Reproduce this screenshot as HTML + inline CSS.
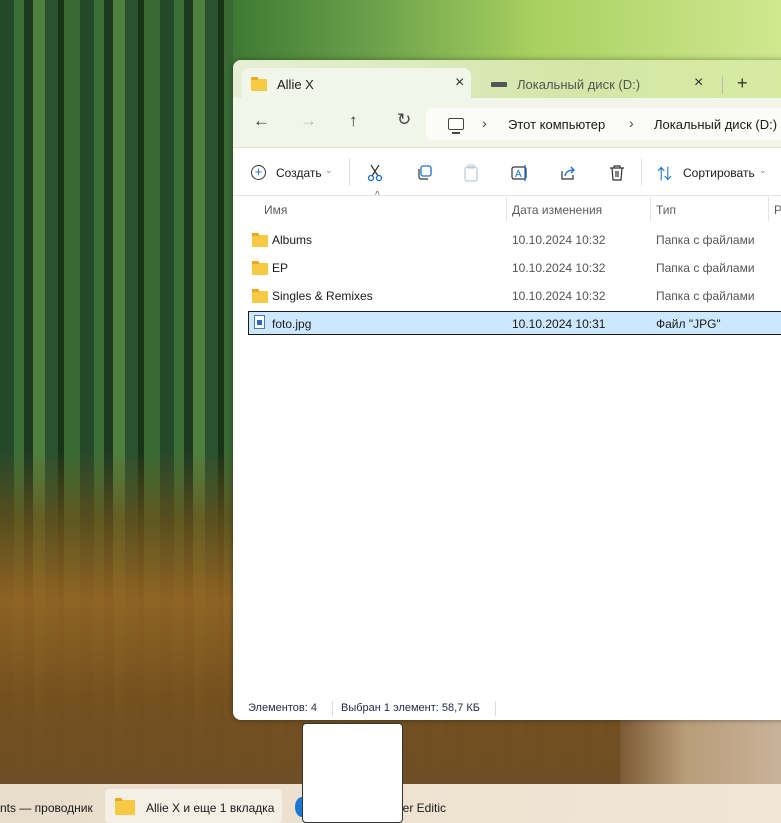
<!DOCTYPE html>
<html><head><meta charset="utf-8"><style>
*{margin:0;padding:0;box-sizing:border-box}
body{width:781px;height:823px;overflow:hidden;position:relative;font-family:"Liberation Sans","Noto Sans CJK SC",sans-serif;font-size:12px;color:#1a1a1a}
.bg{position:absolute;inset:0;background:
linear-gradient(180deg,rgba(0,0,0,0) 0,rgba(0,0,0,0) 450px,rgba(110,80,25,.7) 520px,rgba(150,100,35,.92) 600px,rgba(120,80,30,.95) 700px,#6e4e26 784px),
repeating-linear-gradient(90deg,#24492a 0 14px,#3c6e38 14px 24px,#1c3a20 24px 33px,#4f8040 33px 45px,#2a5230 45px 58px,#183418 58px 64px,#3a6a34 64px 80px),
#2d5a28}
.bg2{position:absolute;left:233px;top:0;width:548px;height:70px;background:linear-gradient(90deg,#3f7a34,#6aa04a 25%,#a8d060 55%,#d0e890)}
.road{position:absolute;left:620px;top:720px;width:161px;height:64px;background:linear-gradient(90deg,#7a5a34,#b89c78 40%,#c9b39a)}
.win{position:absolute;left:233px;top:60px;width:560px;height:660px;background:#fff;border-radius:8px 0 0 8px;overflow:hidden;box-shadow:0 0 6px rgba(0,0,0,.4)}
.tabs{height:38px;background:linear-gradient(90deg,#e6efd6,#d4e6a8 60%,#d6eba0)}
.tab{position:absolute;top:8px;left:9px;width:229px;height:32px;background:#f2f6ea;border-radius:8px 8px 0 0}
.nav{position:absolute;top:38px;left:0;right:0;height:50px;background:#f2f6ea;border-bottom:1px solid #dfe6d2}
.addr{position:absolute;left:193px;top:10px;right:0;height:32px;background:#fbfcf8;border-radius:6px 0 0 6px}
.cmd{position:absolute;top:88px;left:0;right:0;height:48px;background:#fff;border-bottom:1px solid #e8e8e8}
.t{position:absolute;white-space:nowrap}
.hdr{color:#5b5b5b;font-size:12px}
.fold{position:absolute;width:16px;height:12px;background:#f8c944;border-radius:1px}
.fold:before{content:"";position:absolute;left:0;top:-2px;width:7px;height:3px;background:#e9a820;border-radius:1px 1px 0 0}
.tb{position:absolute;left:0;top:784px;width:781px;height:39px;background:linear-gradient(90deg,#e8dccb,#efe3d2 60%,#f0e6d6)}
svg{position:absolute}
</style></head><body>
<div class="bg"></div><div class="bg2"></div><div class="road"></div>
<div class="win">
 <div class="tabs"></div>
 <div class="tab"></div>
 <div class="fold" style="left:18px;top:19px"></div>
 <div class="t" style="left:44px;top:17px;font-size:13px">Allie X</div>
 <div class="t" style="left:222px;top:14px;font-size:16px;color:#333">×</div>
 <div style="position:absolute;left:258px;top:22px;width:16px;height:5px;background:#555;border-radius:1px"></div>
 <div class="t" style="left:284px;top:17px;font-size:13px;color:#555">Локальный диск (D:)</div>
 <div class="t" style="left:461px;top:14px;font-size:16px;color:#333">×</div>
 <div style="position:absolute;left:489px;top:16px;width:1px;height:18px;background:#bbb"></div>
 <div class="t" style="left:504px;top:13px;font-size:18px;color:#333">+</div>
 <div class="nav">
  <div class="addr"></div>
  <div class="t" style="left:20px;top:13px;font-size:17px;color:#333">←</div>
  <div class="t" style="left:67px;top:13px;font-size:17px;color:#bbb">→</div>
  <div class="t" style="left:116px;top:13px;font-size:17px;color:#333">↑</div>
  <div class="t" style="left:164px;top:12px;font-size:17px;color:#444">↻</div>
  <div style="position:absolute;left:215px;top:20px;width:16px;height:12px;border:1.3px solid #444;border-radius:2px"></div>
  <div style="position:absolute;left:219px;top:34px;width:8px;height:1.5px;background:#444"></div>
  <div class="t" style="left:249px;top:17px;font-size:14px;color:#444">›</div>
  <div class="t" style="left:275px;top:19px;font-size:13px">Этот компьютер</div>
  <div class="t" style="left:396px;top:17px;font-size:14px;color:#444">›</div>
  <div class="t" style="left:421px;top:19px;font-size:13px">Локальный диск (D:)</div>
 </div>
 <div class="cmd">
  <div style="position:absolute;left:18px;top:17px;width:15px;height:15px;border:1.3px solid #333;border-radius:50%;font-size:13px;line-height:11px;text-align:center;color:#1a6fd1">+</div>
  <div class="t" style="left:43px;top:18px">Создать</div>
  <div class="t" style="left:92px;top:17px;font-size:9px;color:#888">⌄</div>
  <div style="position:absolute;left:116px;top:10px;width:1px;height:28px;background:#e0e0e0"></div>
  <svg style="left:134px;top:16px" width="16" height="18" viewBox="0 0 16 18"><path d="M4 1 L11 12 M12 1 L5 12" stroke="#333" stroke-width="1.2" fill="none"/><circle cx="4" cy="14" r="2.5" stroke="#1a6fd1" fill="none" stroke-width="1.3"/><circle cx="12" cy="14" r="2.5" stroke="#1a6fd1" fill="none" stroke-width="1.3"/></svg>
  <svg style="left:183px;top:16px" width="18" height="18"><rect x="5" y="2" width="10" height="10" rx="2" stroke="#1a6fd1" fill="none" stroke-width="1.3"/><path d="M3 5 v8 a2 2 0 0 0 2 2 h7" stroke="#333" fill="none" stroke-width="1.2"/></svg>
  <svg style="left:229px;top:16px" width="18" height="18"><rect x="3" y="3" width="12" height="14" rx="2" stroke="#bcd" fill="none" stroke-width="1.2"/><rect x="6" y="1" width="6" height="3" stroke="#bcd" fill="none"/></svg>
  <svg style="left:277px;top:16px" width="20" height="18"><rect x="2" y="3" width="14" height="12" rx="2" stroke="#333" fill="none" stroke-width="1.2"/><text x="5" y="13" font-size="10" fill="#1a6fd1" font-family="Liberation Sans">A</text><path d="M15 1 v16" stroke="#1a6fd1" stroke-width="1.3"/></svg>
  <svg style="left:326px;top:16px" width="18" height="18"><path d="M3 7 v8 h11 v-4" stroke="#333" fill="none" stroke-width="1.2"/><path d="M6 12 q1 -6 9 -6 M12 3 l3 3 -3 3" stroke="#1a6fd1" fill="none" stroke-width="1.3"/></svg>
  <svg style="left:375px;top:16px" width="18" height="18"><path d="M2 4 h14 M6 4 v-2 h6 v2 M4 4 l1 12 h8 l1 -12 M8 7 v6 M10 7 v6" stroke="#333" fill="none" stroke-width="1.2"/></svg>
  <div style="position:absolute;left:408px;top:10px;width:1px;height:28px;background:#e0e0e0"></div>
  <div class="t" style="left:424px;top:15px;font-size:15px;color:#1a6fd1">⇅</div>
  <div class="t" style="left:450px;top:18px">Сортировать</div>
  <div class="t" style="left:526px;top:17px;font-size:9px;color:#888">⌄</div>
 </div>
 <div class="t" style="left:142px;top:130px;font-size:10px;color:#666">^</div>
 <div class="t hdr" style="left:31px;top:143px">Имя</div>
 <div style="position:absolute;left:273px;top:137px;width:1px;height:24px;background:#e5e5e5"></div>
 <div class="t hdr" style="left:279px;top:143px">Дата изменения</div>
 <div style="position:absolute;left:417px;top:137px;width:1px;height:24px;background:#e5e5e5"></div>
 <div class="t hdr" style="left:423px;top:143px">Тип</div>
 <div style="position:absolute;left:535px;top:137px;width:1px;height:24px;background:#e5e5e5"></div>
 <div class="t hdr" style="left:541px;top:143px">Р</div>

 <div class="fold" style="left:19px;top:175px"></div>
 <div class="t" style="left:39px;top:173px">Albums</div>
 <div class="t" style="left:279px;top:173px;color:#555">10.10.2024 10:32</div>
 <div class="t" style="left:423px;top:173px;color:#555">Папка с файлами</div>
 <div class="fold" style="left:19px;top:203px"></div>
 <div class="t" style="left:39px;top:201px">EP</div>
 <div class="t" style="left:279px;top:201px;color:#555">10.10.2024 10:32</div>
 <div class="t" style="left:423px;top:201px;color:#555">Папка с файлами</div>
 <div class="fold" style="left:19px;top:231px"></div>
 <div class="t" style="left:39px;top:229px">Singles &amp; Remixes</div>
 <div class="t" style="left:279px;top:229px;color:#555">10.10.2024 10:32</div>
 <div class="t" style="left:423px;top:229px;color:#555">Папка с файлами</div>
 <div style="position:absolute;left:15px;top:251px;width:560px;height:24px;background:#cce8ff;border:1px solid #1a1a1a"></div>
 <div style="position:absolute;left:21px;top:255px;width:11px;height:14px;border:1px solid #4a7ab8;background:#fff"></div>
 <div style="position:absolute;left:24px;top:260px;width:5px;height:5px;background:#2a6ac8"></div>
 <div class="t" style="left:39px;top:257px">foto.jpg</div>
 <div class="t" style="left:279px;top:257px">10.10.2024 10:31</div>
 <div class="t" style="left:423px;top:257px">Файл "JPG"</div>

 <div class="t" style="left:15px;top:642px;font-size:11px;color:#1f2a4a">Элементов: 4</div>
 <div style="position:absolute;left:99px;top:641px;width:1px;height:15px;background:#ddd"></div>
 <div class="t" style="left:108px;top:642px;font-size:11px;color:#1f2a4a">Выбран 1 элемент: 58,7 КБ</div>
 <div style="position:absolute;left:262px;top:641px;width:1px;height:15px;background:#ddd"></div>
</div>
<div class="tb"></div>
<div class="t" style="left:0;top:801px;font-size:12px">nts — проводник</div>
<div style="position:absolute;left:105px;top:789px;width:177px;height:34px;background:#f6efe6;border-radius:4px"></div>
<div class="fold" style="left:115px;top:800px;width:20px;height:15px"></div>
<div class="t" style="left:146px;top:801px;font-size:12px">Allie X и еще 1 вкладка</div>
<div style="position:absolute;left:295px;top:797px;width:14px;height:20px;background:#1a78d6;border-radius:50% 0 0 50%"></div>
<div class="t" style="left:396px;top:801px;font-size:12px">per Editic</div>
<div style="position:absolute;left:302px;top:723px;width:101px;height:100px;background:#fff;border:1px solid #333;border-radius:4px"></div>
</body></html>
